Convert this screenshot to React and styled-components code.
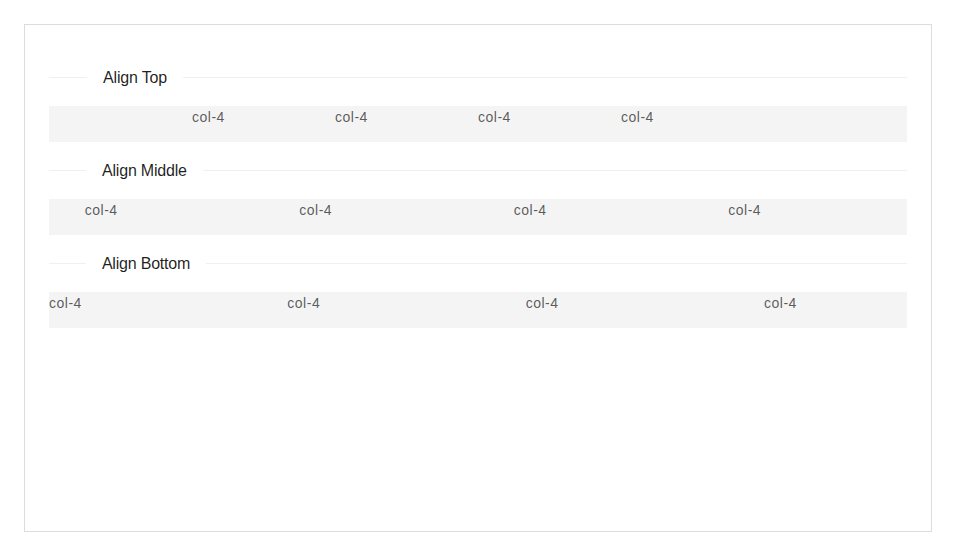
import React from "react";
import styled, { createGlobalStyle } from "styled-components";

const Global = createGlobalStyle`
  body {
    margin: 0;
    background: #fff;
    font-family: "Liberation Sans", Arial, sans-serif;
  }
`;

const Page = styled.div`
  padding: 24px;
`;

const Card = styled.div`
  border: 1px solid #dcdcdc;
  height: 508px;
  box-sizing: border-box;
  padding: 24px;
`;

const Divider = styled.div`
  display: flex;
  align-items: center;
  margin: 16px 0;
  font-size: 16px;
  line-height: 25px;
  color: rgba(0, 0, 0, 0.88);
  white-space: nowrap;

  &::before,
  &::after {
    content: "";
    border-top: 1px solid rgba(5, 5, 5, 0.06);
  }
  &::before {
    width: 5%;
  }
  &::after {
    width: 95%;
  }
`;

const DividerText = styled.span`
  padding: 0 16px;
  letter-spacing: -0.2px;
`;

const Row = styled.div`
  display: flex;
  justify-content: ${(p) => p.$justify};
  background: #f4f4f4;
  height: 36px;
`;

const Col = styled.div`
  flex: 0 0 16.6667%;
  max-width: 16.6667%;
  font-size: 14px;
  line-height: 22px;
  letter-spacing: 0.5px;
  color: rgba(0, 0, 0, 0.65);
`;

const sections = [
  { title: "Align Top", justify: "center" },
  { title: "Align Middle", justify: "space-around" },
  { title: "Align Bottom", justify: "space-between" },
];

const App = () => {
  return (
    <Page>
      <Global />
      <Card>
        {sections.map((s) => (
          <React.Fragment key={s.title}>
            <Divider>
              <DividerText>{s.title}</DividerText>
            </Divider>
            <Row $justify={s.justify}>
              <Col>col-4</Col>
              <Col>col-4</Col>
              <Col>col-4</Col>
              <Col>col-4</Col>
            </Row>
          </React.Fragment>
        ))}
      </Card>
    </Page>
  );
};

export default App;
